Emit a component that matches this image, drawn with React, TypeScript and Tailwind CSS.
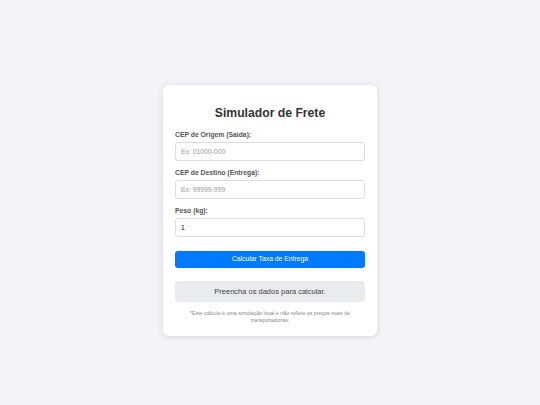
export default function App() {
  return (
    <div
      className="flex h-[405px] w-full justify-center bg-[#f4f4f8] pt-[85px]"
      style={{ fontFamily: '"Liberation Sans", Arial, sans-serif' }}
    >
      <div className="h-fit w-[214px] rounded-[6px] bg-white px-3 pt-[21px] pb-[12px] shadow-[0_1px_6px_rgba(0,0,0,0.12)]">
        <h2 className="text-center text-[12.2px] font-bold leading-[15px] text-[#333]">Simulador de Frete</h2>

        <div className="mt-[10px] flex flex-col gap-[8px]">
          <div className="flex flex-col gap-[3px]">
            <label className="text-[6.8px] font-bold leading-[8px] text-[#555]">CEP de Origem (Saída):</label>
            <input
              className="h-[19px] w-full rounded-[3px] border border-[#dddddd] px-[5px] text-[6.8px] text-[#333] outline-none placeholder:text-[#999]"
              placeholder="Ex: 01000-000"
            />
          </div>
          <div className="flex flex-col gap-[3px]">
            <label className="text-[6.8px] font-bold leading-[8px] text-[#555]">CEP de Destino (Entrega):</label>
            <input
              className="h-[19px] w-full rounded-[3px] border border-[#dddddd] px-[5px] text-[6.8px] text-[#333] outline-none placeholder:text-[#999]"
              placeholder="Ex: 99999-999"
            />
          </div>
          <div className="flex flex-col gap-[3px]">
            <label className="text-[6.8px] font-bold leading-[8px] text-[#555]">Peso (kg):</label>
            <input
              className="h-[19px] w-full rounded-[3px] border border-[#dddddd] px-[5px] text-[6.8px] text-[#222] outline-none"
              defaultValue="1"
            />
          </div>
        </div>

        <button className="mt-[14px] flex h-[17px] w-full items-center justify-center rounded-[3px] bg-[#007bff] text-[6.8px] text-white">
          Calcular Taxa de Entrega
        </button>

        <div className="mt-[13px] flex h-[21px] items-center justify-center rounded-[3px] bg-[#e9ecef] text-[7.5px] text-[#444]">
          Preencha os dados para calcular.
        </div>

        <p className="mt-[8px] px-[6px] text-center text-[5.3px] leading-[7px] text-[#888]">
          *Este cálculo é uma simulação local e não reflete os preços reais de transportadoras.
        </p>
      </div>
    </div>
  );
}
